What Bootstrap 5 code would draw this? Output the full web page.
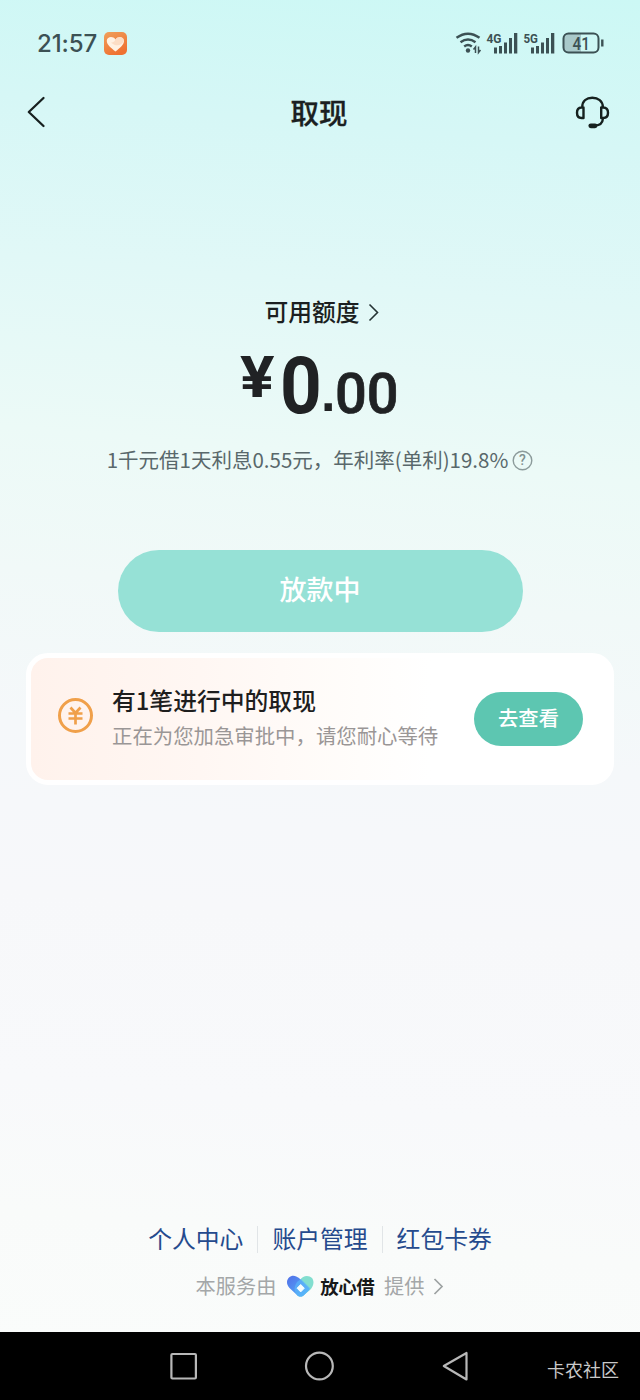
<!DOCTYPE html>
<html lang="zh-CN">
<head>
<meta charset="utf-8">
<meta name="viewport" content="width=device-width, initial-scale=1">
<title>取现</title>
<link href="https://cdn.jsdelivr.net/npm/bootstrap@5.3.0/dist/css/bootstrap.min.css" rel="stylesheet">
<style>
body{font-family:"Noto Sans CJK SC",sans-serif;color:#1b1f21;line-height:1}
svg{display:block;flex:none}
.screen{width:640px;height:1400px;overflow:hidden;background:linear-gradient(185deg,#ccf8f5 0,#d6f7f6 150px,#e1f8f7 310px,#ecfaf7 480px,#f1f9f8 620px,#f5f8fa 770px,#f7f8fa 940px,#f8f9fb 1130px,#f9fbfa 1260px,#fafcfb 1400px)}
.status{height:86px;padding:0 36px 0 37px;color:#3c5154}
.clock{font:500 24px/28px Inter,sans-serif;width:67px;letter-spacing:-.1px;padding-top:2px}
.titlebar{height:52px;padding:0 30px 0 26px}
.page-title{font-size:28.5px;font-weight:500;-webkit-text-stroke:.3px;padding-left:2px}
.hero{height:515px;padding-top:158px}
.limit{font-size:23.8px;height:32px;font-weight:500;padding-left:4px}
.cap{padding-bottom:2px}
.amount{height:70px;margin-top:20px;font-family:Roboto,sans-serif;color:#202224;width:160px}
.amount span{display:block;flex:none;transform-origin:0 50%}
.yen{font-size:57px;font-weight:700;width:40px;line-height:60px;transform:scaleX(1.13)}
.whole{font-size:80px;font-weight:700;width:41px;line-height:77px;transform:scaleX(.91)}
.point{font:700 52px/90px "Liberation Sans",sans-serif;width:14px}
.cents{font-size:56px;font-weight:500;line-height:92px;-webkit-text-stroke:.7px}
.rate{font-size:20.5px;height:30px;margin-top:27px;color:#59686b;white-space:nowrap}
.pay{width:405px;height:82px;color:#fff;font-size:27px;font-weight:500;margin-top:75px}
.pay:disabled{background:#96e1d6;color:#fff;opacity:1}
.notice{width:588px;height:132px;border:5px solid #fff;border-radius:22px;background:linear-gradient(90deg,#fff2ec 0,#fff7f3 170px,#fffdfb 330px,#fff 400px) #fff;padding:0 26px;margin-left:26px}
.notice-icon{margin-right:18px;margin-bottom:7px}
.notice-text{padding-bottom:4px}
.notice-title{font-size:23.8px;line-height:32px;font-weight:500;color:#1e1e1e}
.notice-sub{font-size:20.4px;line-height:30px;margin-top:4px;color:#9a9696;white-space:nowrap}
.view{width:109px;height:54px;background:#5dc6b1;color:#fff;font-size:20.3px;font-weight:500}
.foot{height:547px;padding-bottom:29px}
.links{height:36px;font-size:23.8px}
.links a{color:#254a8d;text-decoration:none;padding-bottom:2px}
.links i{width:1px;height:27px;background:#e1e5e7;margin:0 14px}
.provider{height:34px;font-size:20.2px;color:#a4a7a8;margin-top:12px}
.brand-name{font-size:18.5px;font-weight:700;color:#17191a;letter-spacing:-.6px}
.navkeys{height:68px;background:#000}
.keys{padding-left:170px;width:470px}
.mark-text{font-size:18px;color:#c9c9c9;padding:6px 21px 0 0}
</style>
<script src="https://cdn.jsdelivr.net/npm/bootstrap@5.3.0/dist/js/bootstrap.bundle.min.js"></script>
</head>
<body>
<div class="screen d-flex flex-column">
  <header class="status d-flex align-items-center">
    <span class="clock">21:57</span>
    <svg width="23" height="23" viewBox="0 0 23 23"><defs><linearGradient id="or" x2=".5" y2="1"><stop stop-color="#efa05c"/><stop offset="1" stop-color="#ef7131"/></linearGradient></defs><rect width="23" height="23" rx="5" fill="url(#or)"/><path d="M11.500 19.500C7 16 2.500 12.500 2.800 8.500C3.200 4.500 9 3.800 11.500 7.500C14 3.800 19.500 4.500 20 8.500C20.300 12.500 16 16 11.500 19.500Z" fill="#fff1e3"/><path d="M11.500 7.500C14 3.800 19.500 4.500 20 8.500C18 14 12 15 7 10.500C9 11 10.500 9.500 11.500 7.500Z" fill="#fbd3b5" opacity=".65"/></svg>
    <svg class="ms-auto" width="149" height="24" viewBox="455 31 149 24" fill="none" stroke="#3c5154">
      <path d="M456.500 37.800Q468 29.500 479.500 37.800M460.500 42.300Q468 36.800 475.500 42.300M464.200 46.500Q468 43.600 471.800 46.500" stroke-width="2.400"/>
      <circle cx="468" cy="50.500" r="2.200" fill="#3c5154" stroke="none"/>
      <path d="M475.500 53v-6l-2 2.500M478.500 46.500v6l2-2.500" stroke-width="1.500"/>
      <g fill="#3c5154" stroke="none"><text x="486.500" y="42.500" font-family="Roboto" font-size="12.500" font-weight="700" textLength="15" lengthAdjust="spacingAndGlyphs">4G</text><text x="523.500" y="42.500" font-family="Roboto" font-size="12.500" font-weight="700" textLength="14.500" lengthAdjust="spacingAndGlyphs">5G</text>
      <path d="M494 47.500h3v6h-3zM499 46h3v7.500h-3zM504 42.500h3v11h-3zM509 38h3v15.500h-3zM514 33h3.300v20.500h-3.300zM531 47.500h3v6h-3zM536 46h3v7.500h-3zM541 42.500h3v11h-3zM546 38h3v15.500h-3zM551 33h3.300v20.500h-3.300z"/></g>
      <path d="M568 34h13v18h-13q-4 0-4-4v-10q0-4 4-4z" fill="#a9c9ca" stroke="none"/>
      <rect x="563.500" y="33.500" width="35" height="19" rx="5" stroke-width="2"/><path d="M602.300 39.500v7" stroke-width="2.400"/>
      <text x="572.500" y="49.500" font-family="Roboto" font-size="17.500" font-weight="500" fill="#3c5154" stroke="none" textLength="17.500" lengthAdjust="spacingAndGlyphs">41</text>
    </svg>
  </header>
  <nav class="titlebar d-flex align-items-center justify-content-between">
    <svg width="35" height="34" viewBox="26 95 35 34"><path d="M43.500 98L28.800 112L43.500 126" fill="none" stroke="#17201f" stroke-width="2.300" stroke-linecap="round" stroke-linejoin="round"/></svg>
    <h1 class="page-title m-0">取现</h1>
    <svg width="35" height="34" viewBox="575 95 35 34" fill="none" stroke="#16211f" stroke-width="2.400" stroke-linecap="round" stroke-linejoin="round"><path d="M583.500 107.500V118H581.500Q577 118 577 112.800T581.500 107.500ZM601.200 107.500V118H603.200Q608 118 608 112.800T603.200 107.500ZM582.300 107C582.300 101 586.500 97.800 592.300 97.800S602.800 101 602.800 107M603 118.500C602.500 124 599 125.500 595 125.700"/><path d="M590.800 125.800H595" stroke-width="4.800"/></svg>
  </nav>
  <section class="hero d-flex flex-column align-items-center">
    <div class="limit d-flex align-items-center"><span class="cap">可用额度</span><svg class="ms-2" width="12" height="20" viewBox="0 0 12 20"><path d="M1.500 2.500L9.500 10.500L1.500 18.500" fill="none" stroke="#253334" stroke-width="1.600"/></svg></div>
    <div class="amount d-flex"><span class="yen">¥</span><span class="whole">0</span><span class="point">.</span><span class="cents">00</span></div>
    <div class="rate d-flex align-items-center"><span class="cap">1千元借1天利息0.55元，年利率(单利)19.8%</span><svg class="ms-1" width="21" height="21" viewBox="0 0 21 21"><circle cx="10.500" cy="10.500" r="9.300" fill="none" stroke="#8c9b9b" stroke-width="1.400"/><text x="10.500" y="15.300" text-anchor="middle" font-family="Roboto" font-size="14" font-weight="500" fill="#819090">?</text></svg></div>
    <button class="pay btn rounded-pill border-0 p-0 pb-1 flex-shrink-0" disabled>放款中</button>
  </section>
  <section class="notice d-flex align-items-center flex-shrink-0">
    <svg class="notice-icon" width="37" height="37" viewBox="0 0 37 37" fill="none" stroke="#f0a04a"><circle cx="18.500" cy="18.500" r="16" stroke-width="3"/><path d="M13.500 10.500L18.500 16L23.500 10.500M11.500 16.500H25.500M11.500 21.500H25.500M18.500 16V27.500" stroke-width="2.700"/></svg>
    <div class="notice-text"><div class="notice-title">有1笔进行中的取现</div><div class="notice-sub">正在为您加急审批中，请您耐心等待</div></div>
    <button class="view btn rounded-pill border-0 p-0 pb-1 ms-auto">去查看</button>
  </section>
  <footer class="foot d-flex flex-column justify-content-end align-items-center">
    <div class="links d-flex align-items-center"><a href="#">个人中心</a><i></i><a href="#">账户管理</a><i></i><a href="#">红包卡券</a></div>
    <div class="provider d-flex align-items-center"><span>本服务由</span>
      <svg style="margin-left:11px;margin-right:6px" width="27" height="22" viewBox="0 0 27 22"><defs><linearGradient id="bl" x2="1" y2="1"><stop stop-color="#526ee8"/><stop offset="1" stop-color="#53b9fa"/></linearGradient></defs><path d="M13 5C16 0 22 0 25 3C28 7 26 12 23 15L17 20C15 22 12 22 10 20Z" fill="#82decf"/><path d="M2 2.500C5-.500 9 .500 12 3L22 13Q23 14 22 15L17 20C15 22 12 22 10 20L2.500 13C-1 9-.500 5 2 2.500Z" fill="url(#bl)"/><path d="M10 7L14 4L23 13L22 15L17 20C15 22 12 22 10 20Q5 14 10 7Z" fill="#5bb9fa" opacity=".65"/><path d="M13.700 9.500L17.300 13.200L13.700 16.900L10.100 13.200Z" fill="#f5fdff" stroke="#f5fdff" stroke-linejoin="round"/></svg>
      <span class="brand-name">放心借</span><span style="margin-left:10px">提供</span>
      <svg style="margin-left:9px" width="11" height="20" viewBox="0 0 11 20"><path d="M1.500 3L9 10.500L1.500 18" fill="none" stroke="#9da2a2" stroke-width="1.700"/></svg></div>
  </footer>
  <div class="navkeys d-flex align-items-center justify-content-between flex-shrink-0">
    <div class="keys d-flex align-items-center">
      <svg width="300" height="32" viewBox="170 1350 300 32" fill="none" stroke="#b8b8b8" stroke-width="2.200" stroke-linejoin="round"><rect x="171.400" y="1354" width="24.500" height="24.500" rx="1"/><circle cx="319.400" cy="1366" r="13.400"/><path d="M466.500 1353V1379.500L443.800 1366Z"/></svg>
    </div>
    <span class="mark-text">卡农社区</span>
  </div>
</div>
</body>
</html>
